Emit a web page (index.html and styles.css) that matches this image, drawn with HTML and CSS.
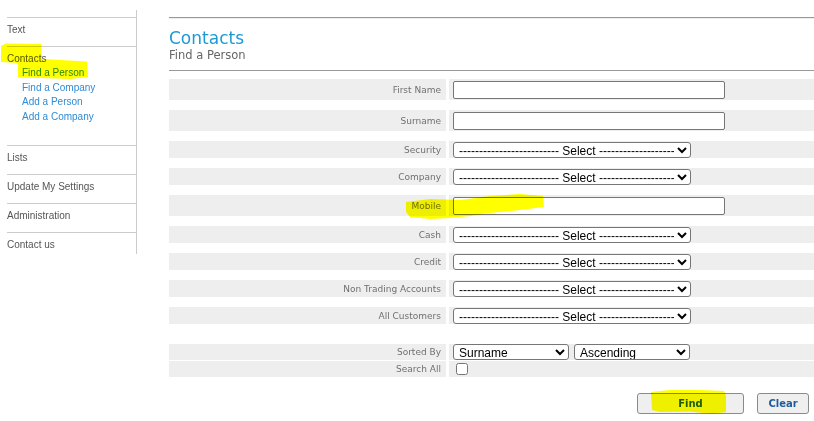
FILE: index.html
```html
<!DOCTYPE html>
<html lang="en">
<head>
    <meta charset="UTF-8">
    <meta name="viewport" content="width=device-width, initial-scale=1.0">
    <title>Contacts - Find a Person</title>
    <link rel="stylesheet" href="styles.css">
</head>
<body>
    <div class="page">
        <!-- Left menu -->
        <nav class="sidebar">
            <div class="nav-item">Text</div>
            <div class="nav-item">
                Contacts
                <ul class="sub-nav">
                    <li><a href="#">Find a Person</a></li>
                    <li><a href="#">Find a Company</a></li>
                    <li><a href="#">Add a Person</a></li>
                    <li><a href="#">Add a Company</a></li>
                </ul>
            </div>
            <div class="nav-item">Lists</div>
            <div class="nav-item">Update My Settings</div>
            <div class="nav-item">Administration</div>
            <div class="nav-item">Contact us</div>
        </nav>

        <main class="content">
            <div class="page-header">
                <h1>Contacts</h1>
                <h2>Find a Person</h2>
            </div>

            <form class="search-form">
                <div class="form-row tall">
                    <label class="label">First Name</label>
                    <div class="field"><input type="text" class="text-input"></div>
                </div>
                <div class="form-row tall">
                    <label class="label">Surname</label>
                    <div class="field"><input type="text" class="text-input"></div>
                </div>
                <div class="form-row">
                    <label class="label">Security</label>
                    <div class="field"><select class="pick"><option>------------------------- Select -------------------</option></select></div>
                </div>
                <div class="form-row">
                    <label class="label">Company</label>
                    <div class="field"><select class="pick"><option>------------------------- Select -------------------</option></select></div>
                </div>
                <div class="form-row tall">
                    <label class="label">Mobile</label>
                    <div class="field"><input type="text" class="text-input"></div>
                </div>
                <div class="form-row">
                    <label class="label">Cash</label>
                    <div class="field"><select class="pick"><option>------------------------- Select -------------------</option></select></div>
                </div>
                <div class="form-row">
                    <label class="label">Credit</label>
                    <div class="field"><select class="pick"><option>------------------------- Select -------------------</option></select></div>
                </div>
                <div class="form-row">
                    <label class="label">Non Trading Accounts</label>
                    <div class="field"><select class="pick"><option>------------------------- Select -------------------</option></select></div>
                </div>
                <div class="form-row group-end">
                    <label class="label">All Customers</label>
                    <div class="field"><select class="pick"><option>------------------------- Select -------------------</option></select></div>
                </div>

                <div class="form-row sort-row">
                    <label class="label">Sorted By</label>
                    <div class="field">
                        <select class="pick half"><option>Surname</option></select>
                        <select class="pick half"><option>Ascending</option></select>
                    </div>
                </div>
                <div class="form-row sort-row">
                    <label class="label">Search All</label>
                    <div class="field"><input type="checkbox" class="check"></div>
                </div>
            </form>

            <div class="actions">
                <button class="btn btn-find">Find</button>
                <button class="btn btn-clear">Clear</button>
            </div>
        </main>
    </div>

    <!-- highlighter marks drawn over the page -->
    <svg class="marker" width="814" height="421" viewBox="0 0 814 421">
        <path d="M1 46 L6 43.5 L41 44 L42 59 L60 60 L87 61.5 L88 77 L70 79 L40 78 L18 77.5 L18 63 L1 62 Z"/>
        <path d="M406 202 L430 199 L460 200 L490 196 L520 194 L543 196 L544 207 L520 210 L490 213 L470 216 L450 218 L430 219 L410 217 L406 212 Z"/>
        <path d="M651 392 L670 390 L700 390 L724 391 L726 396 L726 412 L712 414 L690 411.5 L660 412 L652 410 Z"/>
    </svg>
</body>
</html>
```

FILE: styles.css
```css
body {
    margin: 0;
    padding: 0;
    background-color: #fff;
    font-family: "Liberation Sans", Arial, sans-serif;
}
.page {
    display: flex;
    align-items: flex-start;
}
.sidebar {
    width: 129px;
    margin: 10px 0 0 7px;
    padding-top: 7px;
    border-right: 1px solid #ccc;
    font-size: 10px;
    line-height: 12px;
    color: #555;
}
.nav-item {
    border-top: 1px solid #ccc;
    padding: 6px 0 10px;
}
.nav-item:last-child {
    padding-bottom: 3px;
}
.sub-nav {
    list-style: none;
    margin: 1px 0 11px;
    padding: 0 0 0 15px;
    line-height: 14.5px;
}
.sub-nav a {
    color: #2f8bd5;
    text-decoration: none;
}
.content {
    flex: 1;
    margin: 17px 0 0 32px;
    font-family: "DejaVu Sans", Verdana, sans-serif;
}
.page-header {
    border-top: 1px solid #999;
    border-bottom: 1px solid #999;
    box-shadow: inset 0 1px 0 #eee;
    padding: 10px 0 8px;
}
.page-header h1 {
    margin: 0;
    font-size: 17px;
    line-height: 20px;
    font-weight: normal;
    color: #1c9ad6;
}
.page-header h2 {
    margin: 0;
    font-size: 11.5px;
    line-height: 14px;
    font-weight: normal;
    color: #666;
}
.search-form {
    margin-top: 8px;
}
.form-row {
    display: grid;
    grid-template-columns: 277px 1fr;
    column-gap: 3px;
    height: 17px;
    margin-bottom: 10px;
}
.form-row.tall {
    height: 21px;
}
.form-row.group-end {
    margin-bottom: 20px;
}
.form-row.sort-row {
    height: 16px;
    margin-bottom: 1px;
}
.label,
.field {
    background-color: #eee;
    display: flex;
    align-items: center;
}
.label {
    justify-content: flex-end;
    padding-right: 5px;
    font-size: 9px;
    color: #707070;
}
.field {
    padding-left: 4px;
    gap: 5px;
}
.text-input {
    width: 272px;
    height: 18px;
    box-sizing: border-box;
    margin: 0;
    border: 1px solid #767676;
    border-radius: 2px;
    background: #fff;
}
.pick {
    width: 238px;
    height: 16px;
    box-sizing: border-box;
    margin: 0;
    padding: 0 0 0 1px;
    border: 1px solid #767676;
    border-radius: 3px;
    background-color: #fff;
    color: #000;
    font-family: "Liberation Sans", Arial, sans-serif;
    font-size: 12px;
}
.pick.half {
    width: 116px;
}
.check {
    width: 12px;
    height: 12px;
    margin: 0 0 0 3px;
}
.actions {
    display: flex;
    justify-content: flex-end;
    gap: 13px;
    margin-top: 16px;
    padding-right: 5px;
}
.btn {
    height: 21px;
    border: 1px solid #8a8a8a;
    border-radius: 3px;
    background-color: #efefef;
    color: #1f5c99;
    font-family: "DejaVu Sans", Verdana, sans-serif;
    font-size: 10px;
    font-weight: bold;
    padding: 0;
}
.btn-find {
    width: 107px;
}
.btn-clear {
    width: 52px;
}
.marker {
    position: absolute;
    top: 0;
    left: 0;
    pointer-events: none;
    mix-blend-mode: multiply;
    fill: #ffff00;
}
```
